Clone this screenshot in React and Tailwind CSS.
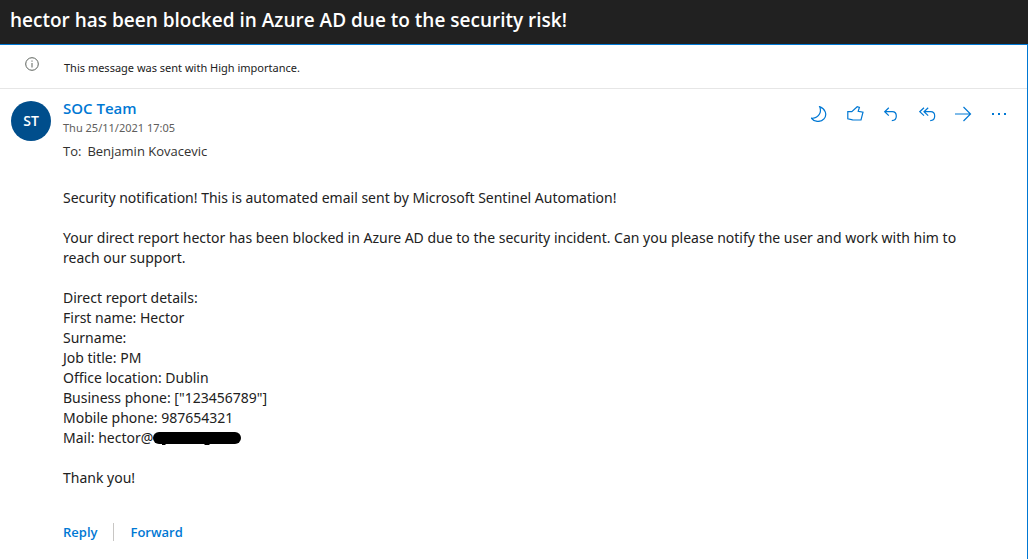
import React from "react";

const details = [
  "Direct report details:",
  "First name: Hector",
  "Surname:",
  "Job title: PM",
  "Office location: Dublin",
  'Business phone: ["123456789"]',
  "Mobile phone: 987654321",
];

const actions = [
  { label: "Switch background", d: "M8.6 .6C14.2 2.6 16.6 8.6 13 12.8C9.6 16.6 3.2 16.2 .4 12.2C2.4 12.4 4.2 12 5.6 11C9 8.6 10.2 4.4 8.6 .6Z" },
  { label: "Like", d: "M.8 5.6H4.8L10.2 .8L12.4 1.5L11.2 5.3L16 6.2L14 14L5.6 13.8L.8 12.8Z" },
  { label: "Reply", d: "M5.8 1.8L1.7 5.7L5.8 9.6M1.7 5.7H9.3C11.8 5.7 13.3 7.6 13.3 10C13.3 12.5 11.8 14.6 8.8 14.6" },
  { label: "Reply all", d: "M5 1.8L.8 5.7L5 9.6M9.2 1.8L5 5.7L9.2 9.6M5 5.7H11.6C14.2 5.7 15.7 7.6 15.7 10C15.7 12.5 14.2 14.6 11.2 14.6" },
  { label: "Forward", d: "M0 8H15.5M8.5 1L15.5 8L8.5 15" },
];

function Icon({ d }) {
  return (
    <svg viewBox="0 0 17 16" className="h-4 w-[17px] fill-none stroke-current" strokeWidth="1.2" aria-hidden="true">
      <path d={d} />
    </svg>
  );
}

export default function App() {
  return (
    <div className="flex min-h-screen flex-col bg-white font-['Noto_Sans','Open_Sans',sans-serif] text-[#212121]">
      <header className="bg-[#212121] px-2.5 pt-1.5 pb-2.5">
        <h1 className="font-['Open_Sans',sans-serif] text-[19px] leading-7 font-semibold text-white">
          hector has been blocked in Azure AD due to the security risk!
        </h1>
      </header>
      <main className="grow border-t border-r border-[#0078d4]">
        <div className="flex h-11 items-start border-b border-[#e6e6e6] pl-[25px]">
          <svg viewBox="0 0 14 14" className="mt-3 h-3.5 w-3.5 fill-none stroke-[#5c625c]" aria-hidden="true">
            <circle cx="7" cy="7" r="6.3" />
            <path d="M7 6v4.5M7 3.5v1.2" />
          </svg>
          <p className="ml-[25px] pt-[13px] text-[11px] leading-5">This message was sent with High importance.</p>
        </div>
        <section className="flex items-start gap-3 pt-2.5 pr-[19px] pl-[11px]">
          <div className="mt-0.5 flex size-10 shrink-0 items-center justify-center rounded-full bg-[#004e8c] font-['Open_Sans',sans-serif] text-sm font-semibold text-white">
            ST
          </div>
          <div className="grow">
            <h2 className="font-['Open_Sans',sans-serif] text-[15px] leading-[18px] font-semibold text-[#0078d4]">SOC Team</h2>
            <p className="text-[11px] leading-[22px] text-[#605e5c]">Thu 25/11/2021 17:05</p>
            <p className="flex gap-1.5 font-['Open_Sans',sans-serif] text-[13px] leading-6 text-[#323130]">
              <span>To:</span>
              <span>Benjamin Kovacevic</span>
            </p>
          </div>
          <div className="mt-[7px] flex gap-[19px] text-[#0078d4]">
            {actions.map((a) => (
              <button key={a.label} type="button" aria-label={a.label}>
                <Icon d={a.d} />
              </button>
            ))}
            <button type="button" aria-label="More actions">
              <svg viewBox="0 0 17 16" className="h-4 w-[17px] fill-current" aria-hidden="true">
                <path d="M1 7h2v2H1zM7 7h2v2H7zM13 7h2v2h-2z" />
              </svg>
            </button>
          </div>
        </section>
        <article className="mt-[25px] flex flex-col gap-5 pr-10 pl-[63px] text-sm leading-5">
          <p>Security notification! This is automated email sent by Microsoft Sentinel Automation!</p>
          <p>
            Your direct report hector has been blocked in Azure AD due to the security incident. Can you please notify
            the user and work with him to reach our support.
          </p>
          <div>
            {details.map((line) => (
              <p key={line}>{line}</p>
            ))}
            <p className="flex items-center">
              Mail: hector@
              <svg viewBox="0 0 88 14" className="h-3.5 w-[88px] fill-black" aria-hidden="true">
                <rect y="1" width="88" height="12" rx="6" />
                <path d="M9 13h4l-1 1H9zM51 13h6l-1 1h-4z" />
              </svg>
            </p>
          </div>
          <p>Thank you!</p>
        </article>
        <footer className="mt-[34px] flex items-center pb-4 pl-[63px] font-['Open_Sans',sans-serif] text-[13px] leading-5 font-semibold text-[#0078d4]">
          <button type="button">Reply</button>
          <span className="mx-4 h-[18px] w-px bg-[#c8c6c4]" />
          <button type="button">Forward</button>
        </footer>
      </main>
    </div>
  );
}
